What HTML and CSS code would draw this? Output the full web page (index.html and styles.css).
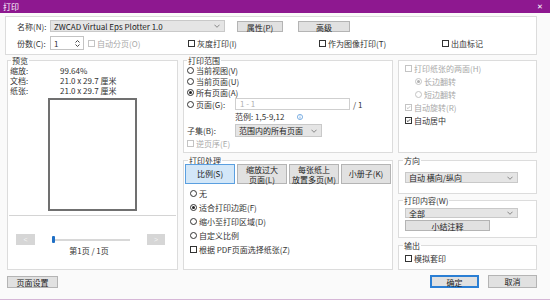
FILE: index.html
```html
<!DOCTYPE html>
<html lang="zh-CN">
<head>
    <meta charset="UTF-8">
    <meta name="viewport" content="width=device-width, initial-scale=1.0">
    <title>打印</title>
    <link rel="stylesheet" href="styles.css">
</head>
<body>
<div class="window">
    <div class="titlebar">
        <span>打印</span>
        <span class="close">✕</span>
    </div>

    <div class="top">
        <div class="row r1">
            <span class="lbl">名称(N):</span>
            <div class="select printer">ZWCAD Virtual Eps Plotter 1.0<svg class="chev" viewBox="0 0 7 4"><path d="M0.5 0.5L3.5 3.5L6.5 0.5"/></svg></div>
            <button class="btn prop">属性(P)</button>
            <button class="btn adv">高级</button>
        </div>
        <div class="row r2">
            <span class="lbl">份数(C):</span>
            <div class="spin"><span>1</span><svg class="arrows" viewBox="0 0 5 9"><path d="M0.5 3.5L2.5 1.5L4.5 3.5M0.5 5.5L2.5 7.5L4.5 5.5"/></svg></div>
            <label class="chk off collate"><i class="box"></i>自动分页(O)</label>
            <label class="chk gray"><i class="box"></i>灰度打印(I)</label>
            <label class="chk image"><i class="box"></i>作为图像打印(T)</label>
            <label class="chk"><i class="box"></i>出血标记</label>
        </div>
    </div>

    <div class="main">
        <fieldset class="preview">
            <legend>预览</legend>
            <div class="info">
                <span>缩放:</span><span>99.64%</span>
                <span>文档:</span><span>21.0 x 29.7 厘米</span>
                <span>纸张:</span><span>21.0 x 29.7 厘米</span>
            </div>
            <div class="paper"></div>
            <div class="sep"></div>
            <div class="nav">
                <button class="navbtn">&lt;</button>
                <div class="slider"><i class="thumb"></i></div>
                <button class="navbtn next">&gt;</button>
            </div>
            <div class="pageno">第1页 / 1页</div>
        </fieldset>

        <fieldset class="range">
            <legend>打印范围</legend>
            <div class="opts">
                <label class="opt"><i class="rad"></i>当前视图(V)</label>
                <label class="opt"><i class="rad"></i>当前页面(U)</label>
                <label class="opt"><i class="rad on"></i>所有页面(A)</label>
                <div class="opt pages">
                    <label class="opt lblcol"><i class="rad"></i>页面(G):</label>
                    <div class="pageinput">1 - 1</div>
                    <span class="of">/ 1</span>
                </div>
            </div>
            <div class="example">
                <span class="extext">范例: 1,5-9,12</span>
                <svg class="infoicon" viewBox="0 0 7 7"><circle cx="3.5" cy="3.5" r="3"/><path d="M3.5 3v2.5M3.5 1.6v0.8"/></svg>
            </div>
            <div class="subset">
                <span class="lblcol">子集(B):</span>
                <div class="select pick">范围内的所有页面<svg class="chev" viewBox="0 0 7 4"><path d="M0.5 0.5L3.5 3.5L6.5 0.5"/></svg></div>
            </div>
            <label class="chk off reverse"><i class="box"></i>逆页序(E)</label>
        </fieldset>

        <fieldset class="duplex">
            <label class="chk off line"><i class="box"></i>打印纸张的两面(H)</label>
            <label class="opt off line indent"><i class="rad on"></i>长边翻转</label>
            <label class="opt off line indent"><i class="rad"></i>短边翻转</label>
            <label class="chk off line"><i class="box"><svg viewBox="0 0 7 7"><path d="M1.2 3.6L2.8 5.1L5.8 1.8"/></svg></i>自动旋转(R)</label>
            <label class="chk line"><i class="box"><svg viewBox="0 0 7 7"><path d="M1.2 3.6L2.8 5.1L5.8 1.8"/></svg></i>自动居中</label>
        </fieldset>

        <fieldset class="process">
            <legend>打印处理</legend>
            <div class="tabs">
                <button class="tab sel">比例(S)</button>
                <button class="tab">缩放过大<br>页面(L)</button>
                <button class="tab">每张纸上<br>放置多页(M)</button>
                <button class="tab">小册子(K)</button>
            </div>
            <div class="scale">
                <label class="opt"><i class="rad"></i>无</label>
                <label class="opt"><i class="rad on"></i>适合打印边距(F)</label>
                <label class="opt"><i class="rad"></i>缩小至打印区域(D)</label>
                <label class="opt"><i class="rad"></i>自定义比例</label>
                <label class="chk"><i class="box"></i>根据 PDF页面选择纸张(Z)</label>
            </div>
        </fieldset>

        <div class="side">
            <fieldset class="orient">
                <legend>方向</legend>
                <div class="select wide">自动 横向/纵向<svg class="chev" viewBox="0 0 7 4"><path d="M0.5 0.5L3.5 3.5L6.5 0.5"/></svg></div>
            </fieldset>
            <fieldset class="content">
                <legend>打印内容(W)</legend>
                <div class="select wide short">全部<svg class="chev" viewBox="0 0 7 4"><path d="M0.5 0.5L3.5 3.5L6.5 0.5"/></svg></div>
                <button class="btn notes">小结注释</button>
            </fieldset>
            <fieldset class="output">
                <legend>输出</legend>
                <label class="chk"><i class="box"></i>模拟套印</label>
            </fieldset>
        </div>
    </div>

    <div class="footer">
        <button class="btn setup">页面设置</button>
        <button class="btn ok">确定</button>
        <button class="btn cancel">取消</button>
    </div>
</div>
</body>
</html>
```

FILE: styles.css
```css
body {
    margin: 0;
    font: 8px/11px "Noto Sans CJK SC", "Liberation Sans", sans-serif;
    color: #333;
}
.window {
    width: 550px;
    height: 300px;
    box-sizing: border-box;
    background: #fafafa;
    border-bottom: 1px solid #d6b6d7;
    display: flex;
    flex-direction: column;
}
.titlebar {
    height: 13px;
    line-height: 13px;
    background: #8e1890;
    color: #fff;
    padding: 0 3px;
    display: flex;
    justify-content: space-between;
}
.close { padding-right: 4px; font-size: 7px; }

/* top box */
.top {
    margin: 3px 13px 0 5px;
    height: 39px;
    box-sizing: border-box;
    border: 1px solid #dcdcdc;
    background: #fff;
    padding: 3px 0 0 11px;
    display: flex;
    flex-direction: column;
    gap: 4px;
}
.row { display: flex; align-items: center; }
.r1 { height: 12px; }
.r2 { height: 14px; }
.lbl { width: 33px; flex: none; }

.select {
    display: flex;
    align-items: center;
    justify-content: space-between;
    background: #e5e5e5;
    border: 1px solid #c9c9c9;
    padding: 0 4px 0 3px;
    box-sizing: border-box;
    color: #222;
}
.chev { width: 6px; height: 4px; fill: none; stroke: #777; stroke-width: 1; }
.printer { width: 175px; height: 12px; }

.btn {
    font: inherit;
    color: #222;
    background: #e1e1e1;
    border: 1px solid #b4b4b4;
    padding: 0;
    box-sizing: border-box;
}
.prop { width: 46px; height: 11px; margin-left: 12px; }
.adv { width: 52px; height: 11px; margin-left: 15px; }

.spin {
    width: 34px;
    height: 14px;
    box-sizing: border-box;
    border: 1px solid #c3c3c3;
    background: #fff;
    display: flex;
    align-items: center;
    justify-content: space-between;
    padding: 0 3px;
}
.arrows { width: 5px; height: 9px; fill: none; stroke: #444; stroke-width: 1; }

/* checkboxes and radios */
.chk, .opt { display: flex; align-items: center; gap: 2px; }
.box {
    width: 7px;
    height: 7px;
    flex: none;
    box-sizing: border-box;
    border: 1px solid #333;
    background: #fff;
    display: flex;
}
.box svg { width: 5px; height: 5px; fill: none; stroke: #222; stroke-width: 1.1; }
.rad {
    width: 7px;
    height: 7px;
    flex: none;
    box-sizing: border-box;
    border: 1px solid #333;
    border-radius: 50%;
    background: #fff;
    display: flex;
    align-items: center;
    justify-content: center;
}
.rad.on::after {
    content: "";
    width: 3px;
    height: 3px;
    border-radius: 50%;
    background: #222;
}
.off { color: #a8a8a8; }
.off .box, .off .rad { border-color: #c4c4c4; }
.off .box svg { stroke: #b0b0b0; }
.off .rad.on::after { background: #b0b0b0; }

.collate { width: 100px; margin-left: 4px; }
.gray { width: 131px; }
.image { width: 123px; }

/* main area */
.main {
    display: grid;
    grid-template-columns: 171px 210px 139px;
    grid-template-rows: 97px 114px;
    gap: 3px 5px;
    margin: 1px 0 0 7px;
}
fieldset {
    margin: 0;
    padding: 0 3px;
    border: 1px solid #dcdcdc;
    background: #fff;
    min-width: 0;
    box-sizing: border-box;
}
legend { padding: 0 1px; line-height: 9px; }

.preview { grid-row: 1 / 3; }
.info {
    display: grid;
    grid-template-columns: 50px auto;
    line-height: 10px;
    margin: 1px 0 0 -1px;
}
.paper {
    width: 89px;
    height: 113px;
    box-sizing: border-box;
    border: 2px solid #707070;
    background: #fff;
    margin: 2px auto 0;
}
.sep { height: 1px; background: #d4d4d4; margin: 4px -2px 0; }
.nav { display: flex; align-items: center; height: 11px; margin-top: 18px; padding-left: 5px; }
.navbtn {
    width: 19px;
    height: 11px;
    padding: 0;
    border: none;
    background: #d6d6d6;
    color: #f4f4f4;
    font: 7px/11px "Liberation Sans", sans-serif;
}
.navbtn.next { width: 18px; margin-left: 17px; }
.slider {
    width: 78px;
    height: 7px;
    margin-left: 17px;
    display: flex;
    align-items: center;
    background: linear-gradient(#d8d8d8, #d8d8d8) center / 100% 2px no-repeat;
}
.thumb { width: 3px; height: 7px; background: #1f6fc5; border-radius: 1px; }
.pageno { text-align: center; line-height: 9px; margin-top: 1px; padding-right: 7px; }

/* print range */
.opts > .opt { height: 11px; }
.opts > .pages { height: 12px; gap: 0; }
.lblcol { width: 48px; flex: none; }
.pageinput {
    width: 115px;
    height: 12px;
    box-sizing: border-box;
    border: 1px solid #cfcfcf;
    background: #fff;
    color: #b0b0b0;
    padding-left: 4px;
    line-height: 10px;
}
.of { margin-left: 3px; }
.example { display: flex; align-items: center; height: 11px; margin: 1px 0 0 48px; }
.extext { width: 62px; }
.infoicon { width: 6px; height: 6px; fill: none; stroke: #4a8fd8; stroke-width: 0.8; }
.subset { display: flex; align-items: center; margin-top: 2px; }
.pick { width: 87px; height: 13px; }
.reverse { height: 11px; margin-top: 1px; }

/* duplex */
.duplex { margin-top: 4px; padding: 1px 6px 0; }
.line { height: 13px; }
.indent { margin-left: 10px; }

/* print processing */
.process { padding: 0 1px; }
.process legend { margin-left: 3px; }
.tabs { display: flex; gap: 2px; margin-top: -1px; }
.tab {
    width: 50px;
    height: 20px;
    padding: 0;
    font: inherit;
    line-height: 10px;
    color: #222;
    background: #e1e1e1;
    border: 1px solid #b4b4b4;
}
.tab.sel { background: #d3e7f8; border-color: #5a9fe0; }
.scale { margin-top: 2px; padding-left: 5px; }
.scale > label { height: 14px; }

/* right column */
.side { grid-column: 3; grid-row: 2; display: flex; flex-direction: column; }
.side fieldset { padding: 0 6px; }
.side legend { margin-left: -2px; }
.orient { height: 38px; }
.content { height: 42px; margin-top: 2px; }
.output { height: 29px; margin-top: 3px; }
.wide { width: 113px; height: 11px; margin-top: 7px; }
.wide.short { height: 10px; margin-top: 3px; }
.notes { display: block; width: 85px; height: 11px; margin-top: 2px; }
.output .chk { height: 11px; margin-top: 3px; }

/* footer */
.footer { display: flex; align-items: flex-start; margin: 5px 13px 0 7px; }
.setup { width: 51px; height: 12px; margin-top: 1px; margin-right: auto; }
.ok { width: 49px; height: 13px; border: 2px solid #2b7fd4; }
.cancel { width: 49px; height: 13px; margin-left: 9px; }
```
